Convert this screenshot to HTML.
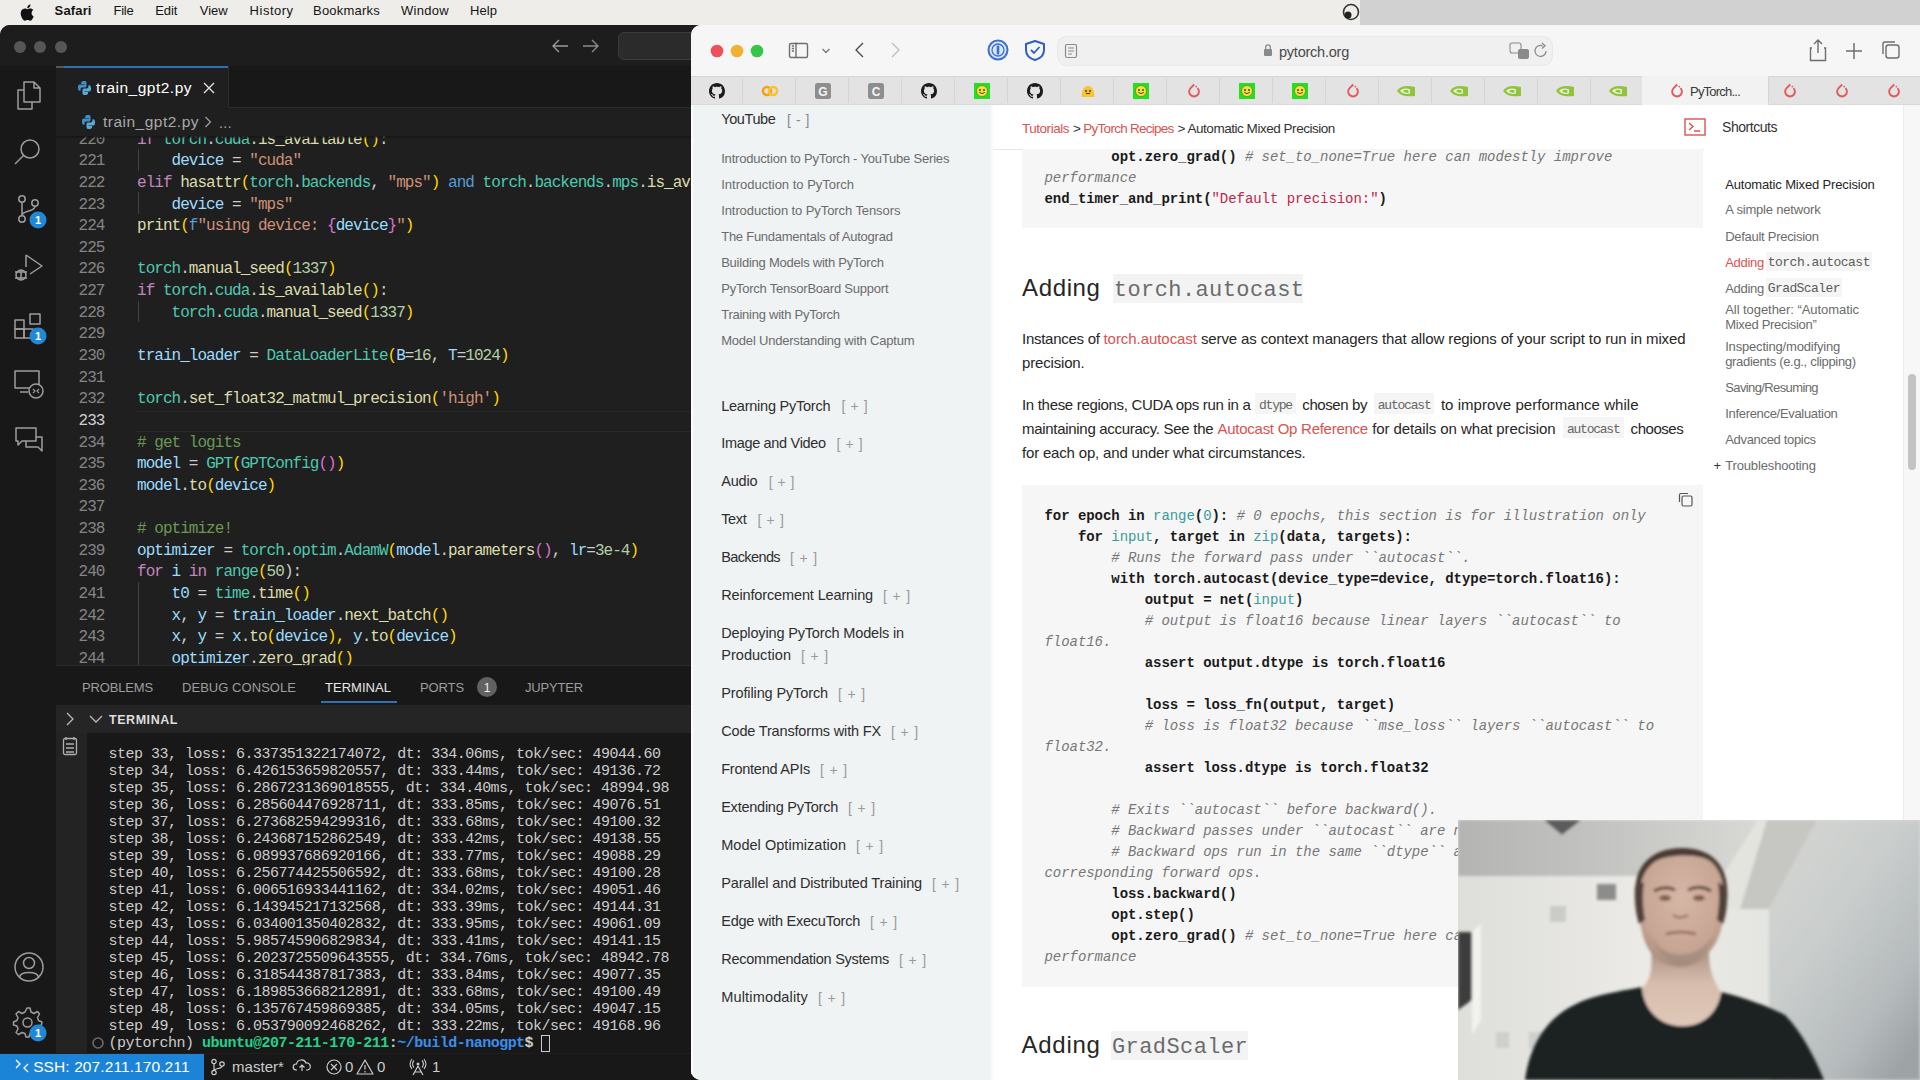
<!DOCTYPE html>
<html><head><meta charset="utf-8">
<style>
*{margin:0;padding:0;box-sizing:border-box}
html,body{width:1920px;height:1080px;overflow:hidden;background:#d0d0d0;font-family:"Liberation Sans",sans-serif}
.t{position:absolute;white-space:pre}
.r{position:absolute}
.m{position:absolute;white-space:pre;font-family:"Liberation Mono",monospace}
</style></head><body>

<div class="r" style="left:0px;top:0px;width:1920px;height:25px;background:#eeede9;"></div>
<div class="r" style="left:1360px;top:0px;width:560px;height:25px;background:#d1d1d1;"></div>
<svg class="r" style="left:20px;top:4px;" width="14" height="17" viewBox="0 0 14 17"><path d="M11.6 9.1c0-2 1.6-2.9 1.7-3-0.9-1.4-2.4-1.5-2.9-1.6-1.2-0.1-2.400.7-3 .7s-1.6-.7-2.600-.7C3.400 4.600 2.100 5.400 1.400 6.600c-1.400 2.500-.4 6.100 1 8.100.7 1 1.500 2.100 2.500 2 1-.04 1.400-.6 2.600-.6s1.600.6 2.600.6c1.100 0 1.800-1 2.400-2 .8-1.100 1.100-2.200 1.100-2.300-.03 0-2.100-.8-2.100-3.300zM9.700 3.100c.5-.7.9-1.600.8-2.600-.8 0-1.800.5-2.400 1.200-.5.600-1 1.600-.8 2.500.9.1 1.800-.4 2.400-1.100z" fill="#111"/></svg>
<div class="t" style="left:54.6px;top:3.4px;font-size:13px;line-height:15.6px;color:#151515;font-weight:700;letter-spacing:0.145px;">Safari</div>
<div class="t" style="left:113.5px;top:3.4px;font-size:13px;line-height:15.6px;color:#151515;letter-spacing:-0.237px;">File</div>
<div class="t" style="left:155.3px;top:3.4px;font-size:13px;line-height:15.6px;color:#151515;letter-spacing:-0.100px;">Edit</div>
<div class="t" style="left:199.7px;top:3.4px;font-size:13px;line-height:15.6px;color:#151515;letter-spacing:0.015px;">View</div>
<div class="t" style="left:249.6px;top:3.4px;font-size:13px;line-height:15.6px;color:#151515;letter-spacing:0.508px;">History</div>
<div class="t" style="left:313.0px;top:3.4px;font-size:13px;line-height:15.6px;color:#151515;letter-spacing:0.220px;">Bookmarks</div>
<div class="t" style="left:401.0px;top:3.4px;font-size:13px;line-height:15.6px;color:#151515;letter-spacing:0.294px;">Window</div>
<div class="t" style="left:470.0px;top:3.4px;font-size:13px;line-height:15.6px;color:#151515;letter-spacing:0.066px;">Help</div>
<svg class="r" style="left:1340px;top:2px;" width="22" height="20" viewBox="0 0 22 20"><circle cx="11" cy="10" r="7.5" fill="none" stroke="#333" stroke-width="1.6"/><circle cx="8" cy="13" r="3.5" fill="#222"/></svg>
<div class="r" style="left:0px;top:25px;width:20px;height:20px;background:#eeede9;"></div>
<div class="r" style="left:680px;top:25px;width:30px;height:30px;background:#1d1d1d;"></div>
<div class="r" style="left:680px;top:1050px;width:30px;height:30px;background:#181818;"></div>
<div class="r" style="left:0;top:25px;width:691px;height:1055px;background:#1f1f1f;border-top-left-radius:10px;overflow:hidden">
<div class="r" style="left:0px;top:0px;width:691px;height:41px;background:#1d1d1d;"></div>
<div class="r" style="left:0px;top:41px;width:691px;height:1px;background:#2b2b2b;"></div>
<svg class="r" style="left:13px;top:15px;" width="14" height="14" viewBox="0 0 14 14"><circle cx="7" cy="7" r="6" fill="#565656"/></svg>
<svg class="r" style="left:33px;top:15px;" width="14" height="14" viewBox="0 0 14 14"><circle cx="7" cy="7" r="6" fill="#565656"/></svg>
<svg class="r" style="left:54px;top:15px;" width="14" height="14" viewBox="0 0 14 14"><circle cx="7" cy="7" r="6" fill="#565656"/></svg>
<svg class="r" style="left:551px;top:13px;" width="20" height="16" viewBox="0 0 20 16"><path d="M2 8H17M8 2L2 8L8 14" fill="none" stroke="#9a9a9a" stroke-width="1.4"/></svg>
<svg class="r" style="left:582px;top:13px;" width="20" height="16" viewBox="0 0 20 16"><path d="M1 8H16M10 2L16 8L10 14" fill="none" stroke="#8a8a8a" stroke-width="1.4"/></svg>
<div class="r" style="left:618px;top:7px;width:100px;height:28px;background:#2b2b2b;border:1px solid #3c3c3c;border-radius:6px"></div>
<div class="r" style="left:0px;top:41px;width:691px;height:42px;background:#181818;"></div>
<div class="r" style="left:56px;top:41px;width:172px;height:42px;background:#1f1f1f;"></div>
<div class="r" style="left:56px;top:41px;width:8px;height:2px;background:#555;"></div>
<div class="r" style="left:64px;top:41px;width:164px;height:2px;background:#2f6fb5;"></div>
<div class="r" style="left:228px;top:41px;width:1px;height:42px;background:#2b2b2b;"></div>
<div class="r" style="left:228px;top:82px;width:463px;height:1px;background:#2b2b2b;"></div>
<svg class="r" style="left:77px;top:55px;" width="16" height="16" viewBox="0 0 16 16"><g transform="scale(1)"><path d="M7.5 1C4 1 4.2 2.5 4.2 2.5V4h3.4v.5H2.8S1 4.300 1 7.600s1.600 3.200 1.600 3.200h1V9.200s-.1-1.600 1.600-1.600h2.800s1.500 0 1.500-1.500V2.600S9.700 1 7.500 1z" fill="#3d8fc6"/><path d="M7.700 15c3.500 0 3.300-1.500 3.300-1.500V12H7.600v-.5h4.800S14 11.700 14 8.400s-1.600-3.200-1.600-3.200h-1v1.600s.1 1.600-1.600 1.600H7s-1.500 0-1.500 1.500v2.800S5.300 15 7.700 15z" fill="#5aa9d6"/></g></svg>
<div class="t" style="left:96.0px;top:54.0px;font-size:15.5px;line-height:18.6px;color:#ffffff;letter-spacing:0.492px;">train_gpt2.py</div>
<svg class="r" style="left:203px;top:57px;" width="12" height="12" viewBox="0 0 12 12"><path d="M1 1L11 11M11 1L1 11" stroke="#e0e0e0" stroke-width="1.4"/></svg>
<svg class="r" style="left:81px;top:89px;" width="16" height="16" viewBox="0 0 16 16"><g transform="scale(1)"><path d="M7.5 1C4 1 4.2 2.5 4.2 2.5V4h3.4v.5H2.8S1 4.300 1 7.600s1.600 3.200 1.600 3.200h1V9.200s-.1-1.600 1.600-1.600h2.800s1.500 0 1.500-1.500V2.600S9.700 1 7.500 1z" fill="#3d8fc6"/><path d="M7.700 15c3.500 0 3.300-1.500 3.300-1.500V12H7.600v-.5h4.800S14 11.700 14 8.400s-1.600-3.200-1.600-3.200h-1v1.600s.1 1.600-1.600 1.600H7s-1.500 0-1.500 1.500v2.800S5.300 15 7.700 15z" fill="#5aa9d6"/></g></svg>
<div class="t" style="left:103.0px;top:88.0px;font-size:15.5px;line-height:18.6px;color:#a8a8a8;letter-spacing:0.492px;">train_gpt2.py</div>
<svg class="r" style="left:204px;top:91px;" width="8" height="12" viewBox="0 0 8 12"><path d="M1.5 1L6.5 6L1.5 11" fill="none" stroke="#a0a0a0" stroke-width="1.2"/></svg>
<div class="t" style="left:219.0px;top:90.4px;font-size:14px;line-height:16.8px;color:#a8a8a8;letter-spacing:0.444px;">...</div>
<div class="r" style="left:0px;top:41px;width:56px;height:987px;background:#181818;"></div>
<svg class="r" style="left:14px;top:55px;" width="30" height="32" viewBox="0 0 30 32"><path d="M10 2H20L26 8V22H10Z M20 2V8H26" fill="none" stroke="#9d9d9d" stroke-width="1.5" stroke-linejoin="round"/><path d="M10 10H4V29H18V22" fill="none" stroke="#9d9d9d" stroke-width="1.5" stroke-linejoin="round"/></svg>
<svg class="r" style="left:12px;top:111px;" width="32" height="32" viewBox="0 0 32 32"><circle cx="18" cy="13" r="9" fill="none" stroke="#9d9d9d" stroke-width="1.5" stroke-linejoin="round"/><path d="M11.5 19.5L3 28" fill="none" stroke="#9d9d9d" stroke-width="1.5" stroke-linejoin="round"/></svg>
<svg class="r" style="left:14px;top:169px;" width="30" height="32" viewBox="0 0 30 32"><circle cx="8" cy="5" r="3.2" fill="none" stroke="#9d9d9d" stroke-width="1.5" stroke-linejoin="round"/><circle cx="21" cy="9" r="3.2" fill="none" stroke="#9d9d9d" stroke-width="1.5" stroke-linejoin="round"/><circle cx="8" cy="25" r="3.2" fill="none" stroke="#9d9d9d" stroke-width="1.5" stroke-linejoin="round"/><path d="M8 8.2V21.8M21 12.2C21 18 10 16 8 21" fill="none" stroke="#9d9d9d" stroke-width="1.5" stroke-linejoin="round"/></svg>
<svg class="r" style="left:12px;top:227px;" width="34" height="32" viewBox="0 0 34 32"><path d="M14 3V15M14 3L30 14L18 22" fill="none" stroke="#9d9d9d" stroke-width="1.5" stroke-linejoin="round"/><circle cx="9" cy="23" r="5" fill="none" stroke="#9d9d9d" stroke-width="1.5" stroke-linejoin="round"/><path d="M3 20H15M3 26H15M9 18V28" fill="none" stroke="#9d9d9d" stroke-width="1.5" stroke-linejoin="round"/></svg>
<svg class="r" style="left:12px;top:286px;" width="34" height="34" viewBox="0 0 34 34"><rect x="3" y="9" width="9" height="9" fill="none" stroke="#9d9d9d" stroke-width="1.5" stroke-linejoin="round"/><rect x="3" y="18" width="9" height="9" fill="none" stroke="#9d9d9d" stroke-width="1.5" stroke-linejoin="round"/><rect x="12" y="18" width="9" height="9" fill="none" stroke="#9d9d9d" stroke-width="1.5" stroke-linejoin="round"/><rect x="18" y="3" width="10" height="10" fill="none" stroke="#9d9d9d" stroke-width="1.5" stroke-linejoin="round"/></svg>
<svg class="r" style="left:12px;top:343px;" width="34" height="34" viewBox="0 0 34 34"><path d="M3 3H27V20H3Z M8 24H16" fill="none" stroke="#9d9d9d" stroke-width="1.5" stroke-linejoin="round"/><circle cx="24" cy="23" r="7" fill="#181818" stroke="#9d9d9d" stroke-width="1.5"/><path d="M21 21L23 23L21 25M27 21L25 23L27 25" fill="none" stroke="#9d9d9d" stroke-width="1.2"/></svg>
<svg class="r" style="left:12px;top:400px;" width="34" height="32" viewBox="0 0 34 32"><path d="M4 3H24V16H10L6 20V16H4Z" fill="none" stroke="#9d9d9d" stroke-width="1.5" stroke-linejoin="round"/><path d="M14 16V22H26L30 26V22V12H24" fill="none" stroke="#9d9d9d" stroke-width="1.5" stroke-linejoin="round"/></svg>
<svg class="r" style="left:29px;top:186px;" width="18" height="18" viewBox="0 0 18 18"><circle cx="9" cy="9" r="8.5" fill="#2188d8"/><text x="9" y="13" text-anchor="middle" font-family="Liberation Sans" font-weight="700" font-size="11" fill="#fff">1</text></svg>
<svg class="r" style="left:29px;top:302px;" width="18" height="18" viewBox="0 0 18 18"><circle cx="9" cy="9" r="8.5" fill="#2188d8"/><text x="9" y="13" text-anchor="middle" font-family="Liberation Sans" font-weight="700" font-size="11" fill="#fff">1</text></svg>
<svg class="r" style="left:12px;top:925px;" width="34" height="34" viewBox="0 0 34 34"><circle cx="17" cy="17" r="14" fill="none" stroke="#9d9d9d" stroke-width="1.5" stroke-linejoin="round"/><circle cx="17" cy="13" r="5.5" fill="none" stroke="#9d9d9d" stroke-width="1.5" stroke-linejoin="round"/><path d="M7.5 27C9 21 25 21 26.5 27" fill="none" stroke="#9d9d9d" stroke-width="1.5" stroke-linejoin="round"/></svg>
<svg class="r" style="left:10px;top:979px;" width="36" height="36" viewBox="0 0 36 36"><path d="M17 4L20 4L21 8L24 9.500L27.500 7.500L29.500 10L27.500 13.500L28.500 16.500L32 18L31.500 21L28 22L27 25L29 28.500L26.500 30.500L23 28.500L20 29.500L19 33H16L15 29.500L12 28.500L8.500 30.500L6 28.500L8 25L7 22L3.500 21L3.500 18L7 16.500L8 13.500L6 10L8.500 7.500L12 9.500L15 8Z" fill="none" stroke="#9d9d9d" stroke-width="1.5" stroke-linejoin="round"/><circle cx="17.500" cy="18.500" r="4.500" fill="none" stroke="#9d9d9d" stroke-width="1.5"/></svg>
<svg class="r" style="left:29px;top:999px;" width="18" height="18" viewBox="0 0 18 18"><circle cx="9" cy="9" r="8.5" fill="#2188d8"/><text x="9" y="13" text-anchor="middle" font-family="Liberation Sans" font-weight="700" font-size="11" fill="#fff">1</text></svg>
<div class="r" style="left:56px;top:83px;width:635px;height:557px;overflow:hidden;background:#1f1f1f">
<div class="m" style="left:22.5px;top:21.7px;font-size:16px;letter-spacing:-0.963px;line-height:21.63px;color:#858585">220</div>
<div class="m" style="left:81px;top:21.7px;font-size:16px;letter-spacing:-0.963px;line-height:21.63px"><span style="color:#c586c0">if </span><span style="color:#4ec9b0">torch</span><span style="color:#cccccc">.</span><span style="color:#4ec9b0">cuda</span><span style="color:#cccccc">.</span><span style="color:#dcdcaa">is_available</span><span style="color:#ffd700">()</span><span style="color:#cccccc">:</span></div>
<div class="m" style="left:22.5px;top:43.3px;font-size:16px;letter-spacing:-0.963px;line-height:21.63px;color:#858585">221</div>
<div class="m" style="left:81px;top:43.3px;font-size:16px;letter-spacing:-0.963px;line-height:21.63px"><span style="color:#9cdcfe">    device</span><span style="color:#cccccc"> = </span><span style="color:#ce9178">&quot;cuda&quot;</span></div>
<div class="m" style="left:22.5px;top:64.9px;font-size:16px;letter-spacing:-0.963px;line-height:21.63px;color:#858585">222</div>
<div class="m" style="left:81px;top:64.9px;font-size:16px;letter-spacing:-0.963px;line-height:21.63px"><span style="color:#c586c0">elif </span><span style="color:#dcdcaa">hasattr</span><span style="color:#ffd700">(</span><span style="color:#4ec9b0">torch</span><span style="color:#cccccc">.</span><span style="color:#4ec9b0">backends</span><span style="color:#cccccc">, </span><span style="color:#ce9178">&quot;mps&quot;</span><span style="color:#ffd700">)</span><span style="color:#569cd6"> and </span><span style="color:#4ec9b0">torch</span><span style="color:#cccccc">.</span><span style="color:#4ec9b0">backends</span><span style="color:#cccccc">.</span><span style="color:#4ec9b0">mps</span><span style="color:#cccccc">.</span><span style="color:#dcdcaa">is_available</span><span style="color:#ffd700">()</span><span style="color:#cccccc">:</span></div>
<div class="m" style="left:22.5px;top:86.5px;font-size:16px;letter-spacing:-0.963px;line-height:21.63px;color:#858585">223</div>
<div class="m" style="left:81px;top:86.5px;font-size:16px;letter-spacing:-0.963px;line-height:21.63px"><span style="color:#9cdcfe">    device</span><span style="color:#cccccc"> = </span><span style="color:#ce9178">&quot;mps&quot;</span></div>
<div class="m" style="left:22.5px;top:108.2px;font-size:16px;letter-spacing:-0.963px;line-height:21.63px;color:#858585">224</div>
<div class="m" style="left:81px;top:108.2px;font-size:16px;letter-spacing:-0.963px;line-height:21.63px"><span style="color:#dcdcaa">print</span><span style="color:#ffd700">(</span><span style="color:#569cd6">f</span><span style="color:#ce9178">&quot;using device: </span><span style="color:#da70d6">{</span><span style="color:#9cdcfe">device</span><span style="color:#da70d6">}</span><span style="color:#ce9178">&quot;</span><span style="color:#ffd700">)</span></div>
<div class="m" style="left:22.5px;top:129.8px;font-size:16px;letter-spacing:-0.963px;line-height:21.63px;color:#858585">225</div>
<div class="m" style="left:22.5px;top:151.4px;font-size:16px;letter-spacing:-0.963px;line-height:21.63px;color:#858585">226</div>
<div class="m" style="left:81px;top:151.4px;font-size:16px;letter-spacing:-0.963px;line-height:21.63px"><span style="color:#4ec9b0">torch</span><span style="color:#cccccc">.</span><span style="color:#dcdcaa">manual_seed</span><span style="color:#ffd700">(</span><span style="color:#b5cea8">1337</span><span style="color:#ffd700">)</span></div>
<div class="m" style="left:22.5px;top:173.1px;font-size:16px;letter-spacing:-0.963px;line-height:21.63px;color:#858585">227</div>
<div class="m" style="left:81px;top:173.1px;font-size:16px;letter-spacing:-0.963px;line-height:21.63px"><span style="color:#c586c0">if </span><span style="color:#4ec9b0">torch</span><span style="color:#cccccc">.</span><span style="color:#4ec9b0">cuda</span><span style="color:#cccccc">.</span><span style="color:#dcdcaa">is_available</span><span style="color:#ffd700">()</span><span style="color:#cccccc">:</span></div>
<div class="m" style="left:22.5px;top:194.7px;font-size:16px;letter-spacing:-0.963px;line-height:21.63px;color:#858585">228</div>
<div class="m" style="left:81px;top:194.7px;font-size:16px;letter-spacing:-0.963px;line-height:21.63px"><span style="color:#cccccc">    </span><span style="color:#4ec9b0">torch</span><span style="color:#cccccc">.</span><span style="color:#4ec9b0">cuda</span><span style="color:#cccccc">.</span><span style="color:#dcdcaa">manual_seed</span><span style="color:#ffd700">(</span><span style="color:#b5cea8">1337</span><span style="color:#ffd700">)</span></div>
<div class="m" style="left:22.5px;top:216.3px;font-size:16px;letter-spacing:-0.963px;line-height:21.63px;color:#858585">229</div>
<div class="m" style="left:22.5px;top:238.0px;font-size:16px;letter-spacing:-0.963px;line-height:21.63px;color:#858585">230</div>
<div class="m" style="left:81px;top:238.0px;font-size:16px;letter-spacing:-0.963px;line-height:21.63px"><span style="color:#9cdcfe">train_loader</span><span style="color:#cccccc"> = </span><span style="color:#4ec9b0">DataLoaderLite</span><span style="color:#ffd700">(</span><span style="color:#9cdcfe">B</span><span style="color:#cccccc">=</span><span style="color:#b5cea8">16</span><span style="color:#cccccc">, </span><span style="color:#9cdcfe">T</span><span style="color:#cccccc">=</span><span style="color:#b5cea8">1024</span><span style="color:#ffd700">)</span></div>
<div class="m" style="left:22.5px;top:259.6px;font-size:16px;letter-spacing:-0.963px;line-height:21.63px;color:#858585">231</div>
<div class="m" style="left:22.5px;top:281.2px;font-size:16px;letter-spacing:-0.963px;line-height:21.63px;color:#858585">232</div>
<div class="m" style="left:81px;top:281.2px;font-size:16px;letter-spacing:-0.963px;line-height:21.63px"><span style="color:#4ec9b0">torch</span><span style="color:#cccccc">.</span><span style="color:#dcdcaa">set_float32_matmul_precision</span><span style="color:#ffd700">(</span><span style="color:#ce9178">&#x27;high&#x27;</span><span style="color:#ffd700">)</span></div>
<div class="m" style="left:22.5px;top:302.8px;font-size:16px;letter-spacing:-0.963px;line-height:21.63px;color:#d0d0d0">233</div>
<div class="r" style="left:79px;top:302.7px;width:600px;height:21.6px;border-top:1px solid #282828;border-bottom:1px solid #282828"></div>
<div class="m" style="left:22.5px;top:324.5px;font-size:16px;letter-spacing:-0.963px;line-height:21.63px;color:#858585">234</div>
<div class="m" style="left:81px;top:324.5px;font-size:16px;letter-spacing:-0.963px;line-height:21.63px"><span style="color:#6a9955"># get logits</span></div>
<div class="m" style="left:22.5px;top:346.1px;font-size:16px;letter-spacing:-0.963px;line-height:21.63px;color:#858585">235</div>
<div class="m" style="left:81px;top:346.1px;font-size:16px;letter-spacing:-0.963px;line-height:21.63px"><span style="color:#9cdcfe">model</span><span style="color:#cccccc"> = </span><span style="color:#4ec9b0">GPT</span><span style="color:#ffd700">(</span><span style="color:#4ec9b0">GPTConfig</span><span style="color:#da70d6">()</span><span style="color:#ffd700">)</span></div>
<div class="m" style="left:22.5px;top:367.7px;font-size:16px;letter-spacing:-0.963px;line-height:21.63px;color:#858585">236</div>
<div class="m" style="left:81px;top:367.7px;font-size:16px;letter-spacing:-0.963px;line-height:21.63px"><span style="color:#9cdcfe">model</span><span style="color:#cccccc">.</span><span style="color:#dcdcaa">to</span><span style="color:#ffd700">(</span><span style="color:#9cdcfe">device</span><span style="color:#ffd700">)</span></div>
<div class="m" style="left:22.5px;top:389.4px;font-size:16px;letter-spacing:-0.963px;line-height:21.63px;color:#858585">237</div>
<div class="m" style="left:22.5px;top:411.0px;font-size:16px;letter-spacing:-0.963px;line-height:21.63px;color:#858585">238</div>
<div class="m" style="left:81px;top:411.0px;font-size:16px;letter-spacing:-0.963px;line-height:21.63px"><span style="color:#6a9955"># optimize!</span></div>
<div class="m" style="left:22.5px;top:432.6px;font-size:16px;letter-spacing:-0.963px;line-height:21.63px;color:#858585">239</div>
<div class="m" style="left:81px;top:432.6px;font-size:16px;letter-spacing:-0.963px;line-height:21.63px"><span style="color:#9cdcfe">optimizer</span><span style="color:#cccccc"> = </span><span style="color:#4ec9b0">torch</span><span style="color:#cccccc">.</span><span style="color:#4ec9b0">optim</span><span style="color:#cccccc">.</span><span style="color:#4ec9b0">AdamW</span><span style="color:#ffd700">(</span><span style="color:#9cdcfe">model</span><span style="color:#cccccc">.</span><span style="color:#dcdcaa">parameters</span><span style="color:#da70d6">()</span><span style="color:#cccccc">, </span><span style="color:#9cdcfe">lr</span><span style="color:#cccccc">=</span><span style="color:#b5cea8">3e-4</span><span style="color:#ffd700">)</span></div>
<div class="m" style="left:22.5px;top:454.3px;font-size:16px;letter-spacing:-0.963px;line-height:21.63px;color:#858585">240</div>
<div class="m" style="left:81px;top:454.3px;font-size:16px;letter-spacing:-0.963px;line-height:21.63px"><span style="color:#c586c0">for </span><span style="color:#9cdcfe">i</span><span style="color:#c586c0"> in </span><span style="color:#4ec9b0">range</span><span style="color:#ffd700">(</span><span style="color:#b5cea8">50</span><span style="color:#cccccc">):</span></div>
<div class="m" style="left:22.5px;top:475.9px;font-size:16px;letter-spacing:-0.963px;line-height:21.63px;color:#858585">241</div>
<div class="m" style="left:81px;top:475.9px;font-size:16px;letter-spacing:-0.963px;line-height:21.63px"><span style="color:#9cdcfe">    t0</span><span style="color:#cccccc"> = </span><span style="color:#4ec9b0">time</span><span style="color:#cccccc">.</span><span style="color:#dcdcaa">time</span><span style="color:#ffd700">()</span></div>
<div class="m" style="left:22.5px;top:497.5px;font-size:16px;letter-spacing:-0.963px;line-height:21.63px;color:#858585">242</div>
<div class="m" style="left:81px;top:497.5px;font-size:16px;letter-spacing:-0.963px;line-height:21.63px"><span style="color:#9cdcfe">    x</span><span style="color:#cccccc">, </span><span style="color:#9cdcfe">y</span><span style="color:#cccccc"> = </span><span style="color:#9cdcfe">train_loader</span><span style="color:#cccccc">.</span><span style="color:#dcdcaa">next_batch</span><span style="color:#ffd700">()</span></div>
<div class="m" style="left:22.5px;top:519.1px;font-size:16px;letter-spacing:-0.963px;line-height:21.63px;color:#858585">243</div>
<div class="m" style="left:81px;top:519.1px;font-size:16px;letter-spacing:-0.963px;line-height:21.63px"><span style="color:#9cdcfe">    x</span><span style="color:#cccccc">, </span><span style="color:#9cdcfe">y</span><span style="color:#cccccc"> = </span><span style="color:#9cdcfe">x</span><span style="color:#cccccc">.</span><span style="color:#dcdcaa">to</span><span style="color:#ffd700">(</span><span style="color:#9cdcfe">device</span><span style="color:#ffd700">), </span><span style="color:#9cdcfe">y</span><span style="color:#cccccc">.</span><span style="color:#dcdcaa">to</span><span style="color:#ffd700">(</span><span style="color:#9cdcfe">device</span><span style="color:#ffd700">)</span></div>
<div class="m" style="left:22.5px;top:540.8px;font-size:16px;letter-spacing:-0.963px;line-height:21.63px;color:#858585">244</div>
<div class="m" style="left:81px;top:540.8px;font-size:16px;letter-spacing:-0.963px;line-height:21.63px"><span style="color:#9cdcfe">    optimizer</span><span style="color:#cccccc">.</span><span style="color:#dcdcaa">zero_grad</span><span style="color:#ffd700">()</span></div>
<div class="r" style="left:81.5px;top:41.2px;width:1px;height:21.6px;background:#404040"></div>
<div class="r" style="left:81.5px;top:84.4px;width:1px;height:21.6px;background:#404040"></div>
<div class="r" style="left:81.5px;top:192.6px;width:1px;height:21.6px;background:#404040"></div>
<div class="r" style="left:81.5px;top:473.8px;width:1px;height:86.5px;background:#404040"></div>
</div>
<div class="r" style="left:56px;top:83px;width:635px;height:28px;background:#1f1f1f;"></div>
<div class="r" style="left:56px;top:111px;width:635px;height:3px;background:linear-gradient(#151515,rgba(31,31,31,0));"></div>
<div class="t" style="left:103.0px;top:88.0px;font-size:15.5px;line-height:18.6px;color:#a8a8a8;letter-spacing:0.492px;">train_gpt2.py</div>
<svg class="r" style="left:81px;top:89px;" width="16" height="16" viewBox="0 0 16 16"><g transform="scale(1)"><path d="M7.5 1C4 1 4.2 2.5 4.2 2.5V4h3.4v.5H2.8S1 4.300 1 7.600s1.600 3.200 1.600 3.200h1V9.200s-.1-1.600 1.600-1.600h2.800s1.500 0 1.500-1.500V2.600S9.700 1 7.500 1z" fill="#3d8fc6"/><path d="M7.700 15c3.500 0 3.300-1.500 3.300-1.500V12H7.600v-.5h4.800S14 11.700 14 8.400s-1.600-3.200-1.600-3.200h-1v1.600s.1 1.600-1.600 1.600H7s-1.500 0-1.500 1.500v2.800S5.300 15 7.700 15z" fill="#5aa9d6"/></g></svg>
<svg class="r" style="left:204px;top:91px;" width="8" height="12" viewBox="0 0 8 12"><path d="M1.5 1L6.5 6L1.5 11" fill="none" stroke="#a0a0a0" stroke-width="1.2"/></svg>
<div class="t" style="left:219.0px;top:90.4px;font-size:14px;line-height:16.8px;color:#a8a8a8;letter-spacing:0.444px;">...</div>
<div class="r" style="left:56px;top:640px;width:635px;height:388px;background:#181818;"></div>
<div class="r" style="left:56px;top:640px;width:635px;height:1px;background:#2b2b2b;"></div>
<div class="t" style="left:82.0px;top:654.5px;font-size:13px;line-height:15.6px;color:#9d9d9d;letter-spacing:-0.155px;">PROBLEMS</div>
<div class="t" style="left:182.0px;top:654.5px;font-size:13px;line-height:15.6px;color:#9d9d9d;letter-spacing:0.045px;">DEBUG CONSOLE</div>
<div class="t" style="left:325.0px;top:654.5px;font-size:13px;line-height:15.6px;color:#e7e7e7;letter-spacing:0.034px;">TERMINAL</div>
<div class="t" style="left:420.0px;top:654.5px;font-size:13px;line-height:15.6px;color:#9d9d9d;letter-spacing:-0.109px;">PORTS</div>
<div class="t" style="left:525.0px;top:654.5px;font-size:13px;line-height:15.6px;color:#9d9d9d;letter-spacing:-0.176px;">JUPYTER</div>
<div class="r" style="left:321px;top:676px;width:76px;height:2px;background:#3071b8;"></div>
<svg class="r" style="left:477px;top:652px;" width="20" height="20" viewBox="0 0 20 20"><circle cx="10" cy="10" r="10" fill="#616161"/><text x="10" y="14.5" text-anchor="middle" font-family="Liberation Sans" font-size="12" fill="#f0f0f0">1</text></svg>
<div class="r" style="left:56px;top:680px;width:635px;height:28px;background:#252526;"></div>
<svg class="r" style="left:64px;top:686px;" width="12" height="16" viewBox="0 0 12 16"><path d="M3 2L9 8L3 14" fill="none" stroke="#bbbbbb" stroke-width="1.3"/></svg>
<svg class="r" style="left:88px;top:688px;" width="16" height="12" viewBox="0 0 16 12"><path d="M2 3L8 9L14 3" fill="none" stroke="#bbbbbb" stroke-width="1.3"/></svg>
<div class="t" style="left:109.0px;top:687.8px;font-size:12.5px;line-height:15.0px;color:#dedede;font-weight:700;letter-spacing:0.553px;">TERMINAL</div>
<div class="r" style="left:56px;top:708px;width:31px;height:320px;background:#232323;"></div>
<div class="r" style="left:87px;top:708px;width:604px;height:320px;background:#181818;"></div>
<svg class="r" style="left:61px;top:710px;" width="18" height="22" viewBox="0 0 18 22"><rect x="2.5" y="3.5" width="13" height="16" rx="1.5" fill="none" stroke="#b0b0b0" stroke-width="1.3"/><path d="M5 9H13M5 13H13M5 17H13M5 2V5M13 2V5" stroke="#b0b0b0" stroke-width="1.3"/></svg>
<div class="m" style="left:108.6px;top:721.2px;font-size:15px;letter-spacing:-0.512px;line-height:17.0px;color:#cccccc">step 33, loss: 6.337351322174072, dt: 334.06ms, tok/sec: 49044.60</div>
<div class="m" style="left:108.6px;top:738.2px;font-size:15px;letter-spacing:-0.512px;line-height:17.0px;color:#cccccc">step 34, loss: 6.426153659820557, dt: 333.44ms, tok/sec: 49136.72</div>
<div class="m" style="left:108.6px;top:755.2px;font-size:15px;letter-spacing:-0.512px;line-height:17.0px;color:#cccccc">step 35, loss: 6.2867231369018555, dt: 334.40ms, tok/sec: 48994.98</div>
<div class="m" style="left:108.6px;top:772.2px;font-size:15px;letter-spacing:-0.512px;line-height:17.0px;color:#cccccc">step 36, loss: 6.285604476928711, dt: 333.85ms, tok/sec: 49076.51</div>
<div class="m" style="left:108.6px;top:789.2px;font-size:15px;letter-spacing:-0.512px;line-height:17.0px;color:#cccccc">step 37, loss: 6.273682594299316, dt: 333.68ms, tok/sec: 49100.32</div>
<div class="m" style="left:108.6px;top:806.2px;font-size:15px;letter-spacing:-0.512px;line-height:17.0px;color:#cccccc">step 38, loss: 6.243687152862549, dt: 333.42ms, tok/sec: 49138.55</div>
<div class="m" style="left:108.6px;top:823.2px;font-size:15px;letter-spacing:-0.512px;line-height:17.0px;color:#cccccc">step 39, loss: 6.089937686920166, dt: 333.77ms, tok/sec: 49088.29</div>
<div class="m" style="left:108.6px;top:840.2px;font-size:15px;letter-spacing:-0.512px;line-height:17.0px;color:#cccccc">step 40, loss: 6.256774425506592, dt: 333.68ms, tok/sec: 49100.28</div>
<div class="m" style="left:108.6px;top:857.2px;font-size:15px;letter-spacing:-0.512px;line-height:17.0px;color:#cccccc">step 41, loss: 6.006516933441162, dt: 334.02ms, tok/sec: 49051.46</div>
<div class="m" style="left:108.6px;top:874.2px;font-size:15px;letter-spacing:-0.512px;line-height:17.0px;color:#cccccc">step 42, loss: 6.143945217132568, dt: 333.39ms, tok/sec: 49144.31</div>
<div class="m" style="left:108.6px;top:891.2px;font-size:15px;letter-spacing:-0.512px;line-height:17.0px;color:#cccccc">step 43, loss: 6.034001350402832, dt: 333.95ms, tok/sec: 49061.09</div>
<div class="m" style="left:108.6px;top:908.2px;font-size:15px;letter-spacing:-0.512px;line-height:17.0px;color:#cccccc">step 44, loss: 5.985745906829834, dt: 333.41ms, tok/sec: 49141.15</div>
<div class="m" style="left:108.6px;top:925.2px;font-size:15px;letter-spacing:-0.512px;line-height:17.0px;color:#cccccc">step 45, loss: 6.2023725509643555, dt: 334.76ms, tok/sec: 48942.78</div>
<div class="m" style="left:108.6px;top:942.2px;font-size:15px;letter-spacing:-0.512px;line-height:17.0px;color:#cccccc">step 46, loss: 6.318544387817383, dt: 333.84ms, tok/sec: 49077.35</div>
<div class="m" style="left:108.6px;top:959.2px;font-size:15px;letter-spacing:-0.512px;line-height:17.0px;color:#cccccc">step 47, loss: 6.189853668212891, dt: 333.68ms, tok/sec: 49100.49</div>
<div class="m" style="left:108.6px;top:976.2px;font-size:15px;letter-spacing:-0.512px;line-height:17.0px;color:#cccccc">step 48, loss: 6.135767459869385, dt: 334.05ms, tok/sec: 49047.15</div>
<div class="m" style="left:108.6px;top:993.2px;font-size:15px;letter-spacing:-0.512px;line-height:17.0px;color:#cccccc">step 49, loss: 6.053790092468262, dt: 333.22ms, tok/sec: 49168.96</div>
<svg class="r" style="left:91px;top:1011.2px;" width="14" height="14" viewBox="0 0 14 14"><circle cx="7" cy="7" r="5" fill="none" stroke="#6b6b6b" stroke-width="1.6"/></svg>
<div class="m" style="left:108.6px;top:1010.2px;font-size:15px;letter-spacing:-0.512px;line-height:17.0px;color:#cccccc">(pytorchn) <b style="color:#23d18b">ubuntu@207-211-170-211</b><b style="color:#cccccc">:</b><b style="color:#3b8eea">~/build-nanogpt</b><b style="color:#cccccc">$</b> </div>
<div class="r" style="left:541px;top:1010.2px;width:9px;height:17px;background:transparent;border:1px solid #cccccc"></div>
<div class="r" style="left:0px;top:1029px;width:691px;height:26px;background:#181818;"></div>
<div class="r" style="left:0px;top:1029px;width:204px;height:26px;background:#1c84d7;"></div>
<svg class="r" style="left:14px;top:1033px;" width="16" height="16" viewBox="0 0 16 16"><path d="M2 2L6 6L2 10M14 6L10 10L14 14" fill="none" stroke="#ffffff" stroke-width="1.3"/></svg>
<div class="t" style="left:33.2px;top:1033.0px;font-size:15.5px;line-height:18.6px;color:#ffffff;letter-spacing:0.093px;">SSH: 207.211.170.211</div>
<svg class="r" style="left:209px;top:1033px;" width="18" height="18" viewBox="0 0 18 18"><circle cx="5" cy="3.5" r="2.2" fill="none" stroke="#ccc" stroke-width="1.2"/><circle cx="5" cy="14.5" r="2.2" fill="none" stroke="#ccc" stroke-width="1.2"/><circle cx="13" cy="6" r="2.2" fill="none" stroke="#ccc" stroke-width="1.2"/><path d="M5 5.7V12.3M13 8.2C13 11 6 10 5 12.3" fill="none" stroke="#ccc" stroke-width="1.2"/></svg>
<div class="t" style="left:232.0px;top:1033.3px;font-size:15px;line-height:18.0px;color:#cccccc;letter-spacing:0.046px;">master*</div>
<svg class="r" style="left:292px;top:1033px;" width="20" height="16" viewBox="0 0 20 16"><path d="M5 12H4A3 3 0 0 1 4.5 6A5 5 0 0 1 14 5A3.500 3.500 0 0 1 15.500 12H14M10 13V7M7.500 9.500L10 7L12.500 9.500" fill="none" stroke="#ccc" stroke-width="1.2"/></svg>
<svg class="r" style="left:325px;top:1033px;" width="18" height="18" viewBox="0 0 18 18"><circle cx="9" cy="9" r="7" fill="none" stroke="#ccc" stroke-width="1.2"/><path d="M6 6L12 12M12 6L6 12" stroke="#ccc" stroke-width="1.2"/></svg>
<div class="t" style="left:345.0px;top:1033.3px;font-size:15px;line-height:18.0px;color:#cccccc;">0</div>
<svg class="r" style="left:356px;top:1033px;" width="18" height="18" viewBox="0 0 18 18"><path d="M9 2L17 16H1Z" fill="none" stroke="#ccc" stroke-width="1.2" stroke-linejoin="round"/><path d="M9 7V11.500M9 13V14.500" stroke="#ccc" stroke-width="1.2"/></svg>
<div class="t" style="left:377.0px;top:1033.3px;font-size:15px;line-height:18.0px;color:#cccccc;">0</div>
<svg class="r" style="left:409px;top:1033px;" width="18" height="18" viewBox="0 0 18 18"><path d="M9 8L4 17M9 8L14 17M6 14H12" fill="none" stroke="#ccc" stroke-width="1.2"/><circle cx="9" cy="6" r="1.500" fill="#ccc"/><path d="M5 2.500A5 5 0 0 0 5 9.500M13 2.500A5 5 0 0 1 13 9.500M3 1A7.500 7.500 0 0 0 3 11M15 1A7.500 7.500 0 0 1 15 11" fill="none" stroke="#ccc" stroke-width="1.1"/></svg>
<div class="t" style="left:432.0px;top:1033.3px;font-size:15px;line-height:18.0px;color:#cccccc;">1</div>
</div>
<div class="r" style="left:691px;top:25px;width:1229px;height:1055px;background:#f6f6f6;border-top-left-radius:10px;border-bottom-left-radius:10px;overflow:hidden">
<div class="r" style="left:0px;top:0px;width:1229px;height:51px;background:#f6f6f6;"></div>
<svg class="r" style="left:19px;top:19px;" width="14" height="14" viewBox="0 0 14 14"><circle cx="7" cy="7" r="6.3" fill="#ed4f5b"/></svg>
<svg class="r" style="left:39px;top:19px;" width="14" height="14" viewBox="0 0 14 14"><circle cx="7" cy="7" r="6.3" fill="#f2b231"/></svg>
<svg class="r" style="left:59px;top:19px;" width="14" height="14" viewBox="0 0 14 14"><circle cx="7" cy="7" r="6.3" fill="#35c649"/></svg>
<svg class="r" style="left:97px;top:16px;" width="22" height="18" viewBox="0 0 22 18"><rect x="1.5" y="2.5" width="18" height="14" rx="1.5" fill="none" stroke="#6e6e6e" stroke-width="1.4" stroke-linejoin="round"/><path d="M8 1.500V16.500M3.800 5H6M3.800 7.500H6M3.800 10H6" fill="none" stroke="#6e6e6e" stroke-width="1.4" stroke-linejoin="round"/></svg>
<svg class="r" style="left:130px;top:22px;" width="10" height="8" viewBox="0 0 10 8"><path d="M1.500 2L5 5.500L8.500 2" fill="none" stroke="#777" stroke-width="1.3"/></svg>
<svg class="r" style="left:162px;top:16px;" width="14" height="18" viewBox="0 0 14 18"><path d="M10 2L3 9L10 16" fill="none" stroke="#4a4a4a" stroke-width="1.4" stroke-linejoin="round"/></svg>
<svg class="r" style="left:197px;top:16px;" width="14" height="18" viewBox="0 0 14 18"><path d="M4 2L11 9L4 16" fill="none" stroke="#bdbdbd" stroke-width="1.4" stroke-linejoin="round"/></svg>
<svg class="r" style="left:296px;top:14px;" width="22" height="22" viewBox="0 0 22 22"><circle cx="11" cy="11" r="9.500" fill="#dbe6fb" stroke="#3a6fd8" stroke-width="2"/><circle cx="11" cy="11" r="6" fill="none" stroke="#3a6fd8" stroke-width="1.3"/><rect x="9.700" y="6.500" width="2.600" height="9" rx="1" fill="#3a6fd8"/></svg>
<svg class="r" style="left:333px;top:14px;" width="22" height="22" viewBox="0 0 22 22"><path d="M11 2L20 5V11C20 16 16 19.500 11 21C6 19.500 2 16 2 11V5Z" fill="none" stroke="#2d5fc4" stroke-width="2" stroke-linejoin="round"/><path d="M7 11L10 14L15.500 8" fill="none" stroke="#2d5fc4" stroke-width="1.8"/></svg>
<div class="r" style="left:367px;top:12px;width:494px;height:28px;background:#f0f0f0;border-radius:8px;box-shadow:0 0 0 0.5px #dcdcdc"></div>
<svg class="r" style="left:373px;top:18px;" width="14" height="16" viewBox="0 0 14 16"><rect x="1.500" y="1.500" width="11" height="13" rx="1.500" fill="none" stroke="#8a8a8a" stroke-width="1.2"/><path d="M4 5H10M4 8H10M4 11H8" stroke="#8a8a8a" stroke-width="1"/></svg>
<svg class="r" style="left:572px;top:18px;" width="10" height="14" viewBox="0 0 10 14"><rect x="1" y="6" width="8" height="7" rx="1" fill="#8a8a8a"/><path d="M2.700 6V4.200A2.300 2.300 0 0 1 7.300 4.200V6" fill="none" stroke="#8a8a8a" stroke-width="1.300"/></svg>
<div class="t" style="left:588.0px;top:18.6px;font-size:14.5px;line-height:17.4px;color:#4a4a4a;letter-spacing:-0.230px;">pytorch.org</div>
<svg class="r" style="left:818px;top:16px;" width="22" height="20" viewBox="0 0 22 20"><rect x="1" y="2" width="11" height="10" rx="2" fill="none" stroke="#8a8a8a" stroke-width="1.1"/><rect x="9" y="8" width="11" height="10" rx="2" fill="#8a8a8a"/></svg>
<svg class="r" style="left:842px;top:17px;" width="16" height="17" viewBox="0 0 16 17"><path d="M13 9A5.500 5.500 0 1 1 9.500 3.800M9 1L12 3.800L9 6.500" fill="none" stroke="#8a8a8a" stroke-width="1.3"/></svg>
<svg class="r" style="left:1117px;top:13px;" width="20" height="24" viewBox="0 0 20 24"><path d="M4 10H2.500V22.500H17.500V10H16" fill="none" stroke="#6e6e6e" stroke-width="1.4"/><path d="M10 15V2M6 6L10 2L14 6" fill="none" stroke="#6e6e6e" stroke-width="1.4"/></svg>
<svg class="r" style="left:1154px;top:17px;" width="18" height="18" viewBox="0 0 18 18"><path d="M9 1V17M1 9H17" stroke="#6e6e6e" stroke-width="1.5"/></svg>
<svg class="r" style="left:1190px;top:15px;" width="20" height="20" viewBox="0 0 20 20"><rect x="5" y="5" width="13" height="13" rx="2.500" fill="none" stroke="#6e6e6e" stroke-width="1.4"/><path d="M2 14V4A2 2 0 0 1 4 2H14" fill="none" stroke="#6e6e6e" stroke-width="1.4"/></svg>
<div class="r" style="left:0px;top:51px;width:1229px;height:29px;background:#e3e3e3;"></div>
<div class="r" style="left:0px;top:51px;width:1229px;height:1px;background:#d6d6d6;"></div>
<div class="r" style="left:0px;top:79px;width:1229px;height:1px;background:#d9d9d9;"></div>
<div class="r" style="left:51px;top:53px;width:1px;height:25px;background:#d5d5d5;"></div>
<div class="r" style="left:104px;top:53px;width:1px;height:25px;background:#d5d5d5;"></div>
<div class="r" style="left:157px;top:53px;width:1px;height:25px;background:#d5d5d5;"></div>
<div class="r" style="left:210px;top:53px;width:1px;height:25px;background:#d5d5d5;"></div>
<div class="r" style="left:263px;top:53px;width:1px;height:25px;background:#d5d5d5;"></div>
<div class="r" style="left:316px;top:53px;width:1px;height:25px;background:#d5d5d5;"></div>
<div class="r" style="left:369px;top:53px;width:1px;height:25px;background:#d5d5d5;"></div>
<div class="r" style="left:422px;top:53px;width:1px;height:25px;background:#d5d5d5;"></div>
<div class="r" style="left:475px;top:53px;width:1px;height:25px;background:#d5d5d5;"></div>
<div class="r" style="left:528px;top:53px;width:1px;height:25px;background:#d5d5d5;"></div>
<div class="r" style="left:581px;top:53px;width:1px;height:25px;background:#d5d5d5;"></div>
<div class="r" style="left:634px;top:53px;width:1px;height:25px;background:#d5d5d5;"></div>
<div class="r" style="left:687px;top:53px;width:1px;height:25px;background:#d5d5d5;"></div>
<div class="r" style="left:740px;top:53px;width:1px;height:25px;background:#d5d5d5;"></div>
<div class="r" style="left:793px;top:53px;width:1px;height:25px;background:#d5d5d5;"></div>
<div class="r" style="left:846px;top:53px;width:1px;height:25px;background:#d5d5d5;"></div>
<div class="r" style="left:899px;top:53px;width:1px;height:25px;background:#d5d5d5;"></div>
<div class="r" style="left:951px;top:51px;width:126px;height:29px;background:#f2f2f2;"></div>
<div class="r" style="left:1077px;top:53px;width:1px;height:25px;background:#d5d5d5;"></div>
<svg class="r" style="left:18px;top:58px;" width="16" height="16" viewBox="0 0 16 16"><path d="M8 0C3.580 0 0 3.580 0 8c0 3.540 2.290 6.530 5.470 7.590.4.070.55-.17.55-.38 0-.19-.01-.82-.01-1.490-2.010.37-2.530-.49-2.690-.94-.09-.23-.48-.94-.82-1.130-.28-.15-.68-.52-.01-.53.63-.01 1.080.58 1.230.82.72 1.210 1.870.87 2.330.66.07-.52.28-.87.51-1.070-1.780-.2-3.640-.89-3.640-3.950 0-.87.31-1.590.82-2.150-.08-.2-.36-1.020.08-2.120 0 0 .67-.21 2.200.82.64-.18 1.320-.27 2-.27.68 0 1.360.09 2 .27 1.530-1.040 2.200-.82 2.200-.82.44 1.100.16 1.920.08 2.120.51.56.82 1.270.82 2.150 0 3.070-1.870 3.750-3.650 3.950.29.25.54.73.54 1.480 0 1.070-.01 1.930-.01 2.200 0 .21.15.46.55.38A8.013 8.013 0 0016 8c0-4.420-3.580-8-8-8z" fill="#1b1b1b"/></svg>
<svg class="r" style="left:70px;top:58px;" width="18" height="16" viewBox="0 0 18 16"><circle cx="6" cy="8" r="4" fill="none" stroke="#f3a216" stroke-width="2.600"/><circle cx="12" cy="8" r="4" fill="none" stroke="#f7c12f" stroke-width="2.600"/></svg>
<svg class="r" style="left:124px;top:58px;" width="16" height="16" viewBox="0 0 16 16"><rect x="0" y="0" width="16" height="16" rx="2.500" fill="#8e8e8e"/><text x="8" y="12.500" text-anchor="middle" font-family="Liberation Sans" font-weight="700" font-size="12" fill="#f4f4f4">G</text></svg>
<svg class="r" style="left:177px;top:58px;" width="16" height="16" viewBox="0 0 16 16"><rect x="0" y="0" width="16" height="16" rx="2.500" fill="#8e8e8e"/><text x="8" y="12.500" text-anchor="middle" font-family="Liberation Sans" font-weight="700" font-size="12" fill="#f4f4f4">C</text></svg>
<svg class="r" style="left:230px;top:58px;" width="16" height="16" viewBox="0 0 16 16"><path d="M8 0C3.580 0 0 3.580 0 8c0 3.540 2.290 6.530 5.470 7.590.4.070.55-.17.55-.38 0-.19-.01-.82-.01-1.490-2.010.37-2.530-.49-2.690-.94-.09-.23-.48-.94-.82-1.130-.28-.15-.68-.52-.01-.53.63-.01 1.080.58 1.230.82.72 1.210 1.870.87 2.330.66.07-.52.28-.87.51-1.070-1.780-.2-3.640-.89-3.640-3.950 0-.87.31-1.590.82-2.150-.08-.2-.36-1.020.08-2.120 0 0 .67-.21 2.200.82.64-.18 1.320-.27 2-.27.68 0 1.360.09 2 .27 1.530-1.040 2.200-.82 2.200-.82.44 1.100.16 1.920.08 2.120.51.56.82 1.270.82 2.150 0 3.070-1.870 3.750-3.650 3.950.29.25.54.73.54 1.480 0 1.070-.01 1.930-.01 2.200 0 .21.15.46.55.38A8.013 8.013 0 0016 8c0-4.420-3.580-8-8-8z" fill="#1b1b1b"/></svg>
<svg class="r" style="left:283px;top:58px;" width="16" height="16" viewBox="0 0 16 16"><rect x="0" y="0" width="16" height="16" fill="#22e022"/><circle cx="8" cy="8" r="5.500" fill="#f4e23c" stroke="#6a6a10" stroke-width=".6"/><circle cx="6" cy="7" r=".9" fill="#333"/><circle cx="10" cy="7" r=".9" fill="#333"/><path d="M5.200 9.300Q8 12 10.800 9.300" fill="none" stroke="#333" stroke-width=".9"/></svg>
<svg class="r" style="left:336px;top:58px;" width="16" height="16" viewBox="0 0 16 16"><path d="M8 0C3.580 0 0 3.580 0 8c0 3.540 2.290 6.530 5.470 7.590.4.070.55-.17.55-.38 0-.19-.01-.82-.01-1.490-2.010.37-2.530-.49-2.690-.94-.09-.23-.48-.94-.82-1.130-.28-.15-.68-.52-.01-.53.63-.01 1.080.58 1.230.82.72 1.210 1.870.87 2.330.66.07-.52.28-.87.51-1.070-1.780-.2-3.640-.89-3.640-3.950 0-.87.31-1.590.82-2.150-.08-.2-.36-1.020.08-2.120 0 0 .67-.21 2.200.82.64-.18 1.320-.27 2-.27.68 0 1.360.09 2 .27 1.530-1.040 2.200-.82 2.200-.82.44 1.100.16 1.920.08 2.120.51.56.82 1.270.82 2.150 0 3.070-1.870 3.750-3.650 3.950.29.25.54.73.54 1.480 0 1.070-.01 1.930-.01 2.200 0 .21.15.46.55.38A8.013 8.013 0 0016 8c0-4.420-3.580-8-8-8z" fill="#1b1b1b"/></svg>
<svg class="r" style="left:389px;top:58px;" width="16" height="16" viewBox="0 0 16 16"><path d="M2 14C1 9 3 3 8 3S15 9 14 14Z" fill="#f6c534"/><circle cx="6" cy="8" r="1" fill="#5a3b10"/><circle cx="10" cy="8" r="1" fill="#5a3b10"/><path d="M6 10.500H10" stroke="#5a3b10" stroke-width="1"/></svg>
<svg class="r" style="left:442px;top:58px;" width="16" height="16" viewBox="0 0 16 16"><rect x="0" y="0" width="16" height="16" fill="#22e022"/><circle cx="8" cy="8" r="5.500" fill="#f4e23c" stroke="#6a6a10" stroke-width=".6"/><circle cx="6" cy="7" r=".9" fill="#333"/><circle cx="10" cy="7" r=".9" fill="#333"/><path d="M5.200 9.300Q8 12 10.800 9.300" fill="none" stroke="#333" stroke-width=".9"/></svg>
<svg class="r" style="left:495px;top:58px;" width="16" height="16" viewBox="0 0 16 16"><path d="M8.200 1.500L4.600 5.100A4.900 4.900 0 1 0 11.500 5.100" fill="none" stroke="#e05a5e" stroke-width="1.900"/><circle cx="10.300" cy="3.600" r="0.9" fill="#e05a5e"/></svg>
<svg class="r" style="left:548px;top:58px;" width="16" height="16" viewBox="0 0 16 16"><rect x="0" y="0" width="16" height="16" fill="#22e022"/><circle cx="8" cy="8" r="5.500" fill="#f4e23c" stroke="#6a6a10" stroke-width=".6"/><circle cx="6" cy="7" r=".9" fill="#333"/><circle cx="10" cy="7" r=".9" fill="#333"/><path d="M5.200 9.300Q8 12 10.800 9.300" fill="none" stroke="#333" stroke-width=".9"/></svg>
<svg class="r" style="left:601px;top:58px;" width="16" height="16" viewBox="0 0 16 16"><rect x="0" y="0" width="16" height="16" fill="#22e022"/><circle cx="8" cy="8" r="5.500" fill="#f4e23c" stroke="#6a6a10" stroke-width=".6"/><circle cx="6" cy="7" r=".9" fill="#333"/><circle cx="10" cy="7" r=".9" fill="#333"/><path d="M5.200 9.300Q8 12 10.800 9.300" fill="none" stroke="#333" stroke-width=".9"/></svg>
<svg class="r" style="left:654px;top:58px;" width="16" height="16" viewBox="0 0 16 16"><path d="M8.200 1.500L4.600 5.100A4.900 4.900 0 1 0 11.500 5.100" fill="none" stroke="#e05a5e" stroke-width="1.900"/><circle cx="10.300" cy="3.600" r="0.9" fill="#e05a5e"/></svg>
<svg class="r" style="left:705px;top:59px;" width="20" height="14" viewBox="0 0 20 14"><path d="M1 7C4 2 10 1 19 3V12C11 13 5 12 1 7Z" fill="#8fc43c"/><path d="M4 7C7 4 11 4 14 5.500V9.500C11 10.500 7 10 4 7Z" fill="#e8f2d8"/><path d="M7 7C9 5.500 11 5.500 12.500 6.500V8.500C10.500 9 8.500 8.600 7 7Z" fill="#8fc43c"/></svg>
<svg class="r" style="left:758px;top:59px;" width="20" height="14" viewBox="0 0 20 14"><path d="M1 7C4 2 10 1 19 3V12C11 13 5 12 1 7Z" fill="#8fc43c"/><path d="M4 7C7 4 11 4 14 5.500V9.500C11 10.500 7 10 4 7Z" fill="#e8f2d8"/><path d="M7 7C9 5.500 11 5.500 12.500 6.500V8.500C10.500 9 8.500 8.600 7 7Z" fill="#8fc43c"/></svg>
<svg class="r" style="left:811px;top:59px;" width="20" height="14" viewBox="0 0 20 14"><path d="M1 7C4 2 10 1 19 3V12C11 13 5 12 1 7Z" fill="#8fc43c"/><path d="M4 7C7 4 11 4 14 5.500V9.500C11 10.500 7 10 4 7Z" fill="#e8f2d8"/><path d="M7 7C9 5.500 11 5.500 12.500 6.500V8.500C10.500 9 8.500 8.600 7 7Z" fill="#8fc43c"/></svg>
<svg class="r" style="left:864px;top:59px;" width="20" height="14" viewBox="0 0 20 14"><path d="M1 7C4 2 10 1 19 3V12C11 13 5 12 1 7Z" fill="#8fc43c"/><path d="M4 7C7 4 11 4 14 5.500V9.500C11 10.500 7 10 4 7Z" fill="#e8f2d8"/><path d="M7 7C9 5.500 11 5.500 12.500 6.500V8.500C10.500 9 8.500 8.600 7 7Z" fill="#8fc43c"/></svg>
<svg class="r" style="left:917px;top:59px;" width="20" height="14" viewBox="0 0 20 14"><path d="M1 7C4 2 10 1 19 3V12C11 13 5 12 1 7Z" fill="#8fc43c"/><path d="M4 7C7 4 11 4 14 5.500V9.500C11 10.500 7 10 4 7Z" fill="#e8f2d8"/><path d="M7 7C9 5.500 11 5.500 12.500 6.500V8.500C10.500 9 8.500 8.600 7 7Z" fill="#8fc43c"/></svg>
<svg class="r" style="left:978px;top:58px;" width="16" height="16" viewBox="0 0 16 16"><path d="M8.200 1.500L4.600 5.100A4.900 4.900 0 1 0 11.500 5.100" fill="none" stroke="#e05a5e" stroke-width="1.900"/><circle cx="10.300" cy="3.600" r="0.9" fill="#e05a5e"/></svg>
<div class="t" style="left:999.0px;top:59.0px;font-size:13px;line-height:15.6px;color:#3a3a3a;letter-spacing:-0.779px;">PyTorch...</div>
<svg class="r" style="left:1091px;top:58px;" width="16" height="16" viewBox="0 0 16 16"><path d="M8.200 1.500L4.600 5.100A4.900 4.900 0 1 0 11.500 5.100" fill="none" stroke="#e05a5e" stroke-width="1.900"/><circle cx="10.300" cy="3.600" r="0.9" fill="#e05a5e"/></svg>
<svg class="r" style="left:1143px;top:58px;" width="16" height="16" viewBox="0 0 16 16"><path d="M8.200 1.500L4.600 5.100A4.900 4.900 0 1 0 11.500 5.100" fill="none" stroke="#e05a5e" stroke-width="1.900"/><circle cx="10.300" cy="3.600" r="0.9" fill="#e05a5e"/></svg>
<svg class="r" style="left:1195px;top:58px;" width="16" height="16" viewBox="0 0 16 16"><path d="M8.200 1.500L4.600 5.100A4.900 4.900 0 1 0 11.500 5.100" fill="none" stroke="#e05a5e" stroke-width="1.900"/><circle cx="10.300" cy="3.600" r="0.9" fill="#e05a5e"/></svg>
<div class="r" style="left:0px;top:80px;width:1229px;height:975px;background:#ffffff;"></div>
<div class="r" style="left:0px;top:80px;width:302px;height:975px;background:#f0f3f4;"></div>
<div class="r" style="left:0px;top:80px;width:2px;height:975px;background:#fcfcfc;"></div>
<div class="r" style="left:299px;top:80px;width:4px;height:975px;background:linear-gradient(90deg,#f0f3f4,#ffffff);"></div>
<div class="r" style="left:1212px;top:80px;width:17px;height:975px;background:#f7f7f7;border-left:1px solid #ececec"></div>
<div class="r" style="left:1217px;top:349px;width:8px;height:96px;background:#c3c3c3;border-radius:4px"></div>
<div class="t" style="left:30.2px;top:86.4px;font-size:14.5px;line-height:17.4px;color:#2e2e2e;letter-spacing:-0.397px;">YouTube</div>
<div class="t" style="left:96.0px;top:86.7px;font-size:14px;line-height:16.8px;color:#8a8a8a;letter-spacing:0.556px;">[ - ]</div>
<div class="t" style="left:30.2px;top:125.5px;font-size:13px;line-height:15.6px;color:#6b6b6c;letter-spacing:-0.195px;">Introduction to PyTorch - YouTube Series</div>
<div class="t" style="left:30.2px;top:151.5px;font-size:13px;line-height:15.6px;color:#6b6b6c;letter-spacing:-0.002px;">Introduction to PyTorch</div>
<div class="t" style="left:30.2px;top:177.5px;font-size:13px;line-height:15.6px;color:#6b6b6c;letter-spacing:-0.088px;">Introduction to PyTorch Tensors</div>
<div class="t" style="left:30.2px;top:203.5px;font-size:13px;line-height:15.6px;color:#6b6b6c;letter-spacing:-0.253px;">The Fundamentals of Autograd</div>
<div class="t" style="left:30.2px;top:229.5px;font-size:13px;line-height:15.6px;color:#6b6b6c;letter-spacing:-0.235px;">Building Models with PyTorch</div>
<div class="t" style="left:30.2px;top:255.5px;font-size:13px;line-height:15.6px;color:#6b6b6c;letter-spacing:-0.225px;">PyTorch TensorBoard Support</div>
<div class="t" style="left:30.2px;top:281.5px;font-size:13px;line-height:15.6px;color:#6b6b6c;letter-spacing:-0.251px;">Training with PyTorch</div>
<div class="t" style="left:30.2px;top:307.5px;font-size:13px;line-height:15.6px;color:#6b6b6c;letter-spacing:-0.204px;">Model Understanding with Captum</div>
<div class="t" style="left:30.2px;top:372.9px;font-size:14.5px;line-height:17.4px;color:#2e2e2e;letter-spacing:-0.233px;">Learning PyTorch</div>
<div class="t" style="left:150.5px;top:373.2px;font-size:14px;line-height:16.8px;color:#9a9a9a;letter-spacing:0.613px;">[ + ]</div>
<div class="t" style="left:30.2px;top:410.4px;font-size:14.5px;line-height:17.4px;color:#2e2e2e;letter-spacing:-0.318px;">Image and Video</div>
<div class="t" style="left:145.5px;top:410.7px;font-size:14px;line-height:16.8px;color:#9a9a9a;letter-spacing:0.613px;">[ + ]</div>
<div class="t" style="left:30.2px;top:448.4px;font-size:14.5px;line-height:17.4px;color:#2e2e2e;letter-spacing:-0.157px;">Audio</div>
<div class="t" style="left:77.8px;top:448.7px;font-size:14px;line-height:16.8px;color:#9a9a9a;letter-spacing:0.493px;">[ + ]</div>
<div class="t" style="left:30.2px;top:486.4px;font-size:14.5px;line-height:17.4px;color:#2e2e2e;letter-spacing:-0.323px;">Text</div>
<div class="t" style="left:66.5px;top:486.7px;font-size:14px;line-height:16.8px;color:#9a9a9a;letter-spacing:0.653px;">[ + ]</div>
<div class="t" style="left:30.2px;top:524.4px;font-size:14.5px;line-height:17.4px;color:#2e2e2e;letter-spacing:-0.609px;">Backends</div>
<div class="t" style="left:99.0px;top:524.7px;font-size:14px;line-height:16.8px;color:#9a9a9a;letter-spacing:0.853px;">[ + ]</div>
<div class="t" style="left:30.2px;top:562.4px;font-size:14.5px;line-height:17.4px;color:#2e2e2e;letter-spacing:-0.134px;">Reinforcement Learning</div>
<div class="t" style="left:192.0px;top:562.7px;font-size:14px;line-height:16.8px;color:#9a9a9a;letter-spacing:0.853px;">[ + ]</div>
<div class="t" style="left:30.2px;top:600.4px;font-size:14.5px;line-height:17.4px;color:#2e2e2e;letter-spacing:-0.154px;">Deploying PyTorch Models in</div>
<div class="t" style="left:30.2px;top:622.4px;font-size:14.5px;line-height:17.4px;color:#2e2e2e;letter-spacing:0.048px;">Production</div>
<div class="t" style="left:110.0px;top:622.7px;font-size:14px;line-height:16.8px;color:#9a9a9a;letter-spacing:0.853px;">[ + ]</div>
<div class="t" style="left:30.2px;top:660.4px;font-size:14.5px;line-height:17.4px;color:#2e2e2e;letter-spacing:-0.117px;">Profiling PyTorch</div>
<div class="t" style="left:147.0px;top:660.7px;font-size:14px;line-height:16.8px;color:#9a9a9a;letter-spacing:0.853px;">[ + ]</div>
<div class="t" style="left:30.2px;top:698.4px;font-size:14.5px;line-height:17.4px;color:#2e2e2e;letter-spacing:-0.164px;">Code Transforms with FX</div>
<div class="t" style="left:200.0px;top:698.7px;font-size:14px;line-height:16.8px;color:#9a9a9a;letter-spacing:0.853px;">[ + ]</div>
<div class="t" style="left:30.2px;top:736.4px;font-size:14.5px;line-height:17.4px;color:#2e2e2e;letter-spacing:-0.237px;">Frontend APIs</div>
<div class="t" style="left:129.0px;top:736.7px;font-size:14px;line-height:16.8px;color:#9a9a9a;letter-spacing:0.853px;">[ + ]</div>
<div class="t" style="left:30.2px;top:774.4px;font-size:14.5px;line-height:17.4px;color:#2e2e2e;letter-spacing:-0.241px;">Extending PyTorch</div>
<div class="t" style="left:157.0px;top:774.7px;font-size:14px;line-height:16.8px;color:#9a9a9a;letter-spacing:0.853px;">[ + ]</div>
<div class="t" style="left:30.2px;top:812.4px;font-size:14.5px;line-height:17.4px;color:#2e2e2e;letter-spacing:0.039px;">Model Optimization</div>
<div class="t" style="left:165.0px;top:812.7px;font-size:14px;line-height:16.8px;color:#9a9a9a;letter-spacing:0.853px;">[ + ]</div>
<div class="t" style="left:30.2px;top:850.4px;font-size:14.5px;line-height:17.4px;color:#2e2e2e;letter-spacing:-0.143px;">Parallel and Distributed Training</div>
<div class="t" style="left:241.0px;top:850.7px;font-size:14px;line-height:16.8px;color:#9a9a9a;letter-spacing:0.853px;">[ + ]</div>
<div class="t" style="left:30.2px;top:888.4px;font-size:14.5px;line-height:17.4px;color:#2e2e2e;letter-spacing:-0.233px;">Edge with ExecuTorch</div>
<div class="t" style="left:179.0px;top:888.7px;font-size:14px;line-height:16.8px;color:#9a9a9a;letter-spacing:0.853px;">[ + ]</div>
<div class="t" style="left:30.2px;top:926.4px;font-size:14.5px;line-height:17.4px;color:#2e2e2e;letter-spacing:-0.248px;">Recommendation Systems</div>
<div class="t" style="left:208.0px;top:926.7px;font-size:14px;line-height:16.8px;color:#9a9a9a;letter-spacing:0.853px;">[ + ]</div>
<div class="t" style="left:30.2px;top:964.4px;font-size:14.5px;line-height:17.4px;color:#2e2e2e;letter-spacing:0.169px;">Multimodality</div>
<div class="t" style="left:127.0px;top:964.7px;font-size:14px;line-height:16.8px;color:#9a9a9a;letter-spacing:0.853px;">[ + ]</div>
<div class="r" style="left:302px;top:124px;width:910px;height:1px;background:#e8e8e8;"></div>
<div class="t" style="left:331.0px;top:96.2px;font-size:13.5px;line-height:16.2px;color:#d9534f;letter-spacing:-0.474px;">Tutorials</div>
<div class="t" style="left:381.9px;top:96.2px;font-size:13.5px;line-height:16.2px;color:#333;">&gt;</div>
<div class="t" style="left:392.3px;top:96.2px;font-size:13.5px;line-height:16.2px;color:#d9534f;letter-spacing:-0.732px;">PyTorch Recipes</div>
<div class="t" style="left:486.5px;top:96.2px;font-size:13.5px;line-height:16.2px;color:#333;">&gt;</div>
<div class="t" style="left:496.5px;top:96.2px;font-size:13.5px;line-height:16.2px;color:#333;letter-spacing:-0.466px;">Automatic Mixed Precision</div>
<svg class="r" style="left:993px;top:93px;" width="22" height="18" viewBox="0 0 22 18"><rect x="1" y="1" width="20" height="16" fill="none" stroke="#d9534f" stroke-width="1.4"/><path d="M5 5L9 8.500L5 12M10 13H16" fill="none" stroke="#d9534f" stroke-width="1.4"/></svg>
<div class="t" style="left:1031.0px;top:94.4px;font-size:14px;line-height:16.8px;color:#333;letter-spacing:-0.459px;">Shortcuts</div>
<div class="r" style="left:331px;top:124px;width:681px;height:79px;background:#f6f6f6;"></div>
<div class="m" style="left:353.5px;top:122.3px;font-size:14px;letter-spacing:-0.052px;line-height:21px"><span style="color:#1a1a1a;font-weight:700">        opt.zero_grad()</span><span style="color:#777777;font-style:italic"> # set_to_none=True here can modestly improve</span></div>
<div class="m" style="left:353.5px;top:142.8px;font-size:14px;letter-spacing:-0.052px;line-height:21px"><span style="color:#777777;font-style:italic">performance</span></div>
<div class="m" style="left:353.5px;top:163.9px;font-size:14px;letter-spacing:-0.052px;line-height:21px"><span style="color:#1a1a1a;font-weight:700">end_timer_and_print(</span><span style="color:#c0254c;">&quot;Default precision:&quot;</span><span style="color:#1a1a1a;font-weight:700">)</span></div>
<div class="t" style="left:331.0px;top:248.9px;font-size:24px;line-height:28.8px;color:#262626;letter-spacing:0.646px;">Adding</div>
<div class="r" style="left:421.6px;top:249.4px;width:190.4px;height:28.6px;background:#f3f3f3;"></div>
<div class="m" style="left:422.8px;top:252.8px;font-size:22px;line-height:26.4px;letter-spacing:0.416px;color:#6b6b6b">torch.autocast</div>
<div class="t" style="left:331.0px;top:304.8px;font-size:15px;line-height:18.0px;color:#262626;letter-spacing:-0.273px;">Instances of </div>
<div class="t" style="left:412.5px;top:304.8px;font-size:15px;line-height:18.0px;color:#d9534f;letter-spacing:-0.058px;">torch.autocast</div>
<div class="t" style="left:505.9px;top:304.8px;font-size:15px;line-height:18.0px;color:#262626;letter-spacing:-0.121px;"> serve as context managers that allow regions of your script to run in mixed</div>
<div class="t" style="left:331.0px;top:328.8px;font-size:15px;line-height:18.0px;color:#262626;letter-spacing:-0.169px;">precision.</div>
<div class="t" style="left:331.0px;top:370.8px;font-size:15px;line-height:18.0px;color:#262626;letter-spacing:-0.311px;">In these regions, CUDA ops run in a</div>
<div class="r" style="left:564px;top:368px;width:40.90000000000009px;height:21px;background:#f5f5f5;"></div>
<div class="m" style="left:568.0px;top:371.5px;font-size:13px;line-height:18px;letter-spacing:-1.222px;color:#666666">dtype</div>
<div class="t" style="left:611.3px;top:370.8px;font-size:15px;line-height:18.0px;color:#262626;letter-spacing:-0.408px;">chosen by</div>
<div class="r" style="left:682.7px;top:368px;width:60.799999999999955px;height:21px;background:#f5f5f5;"></div>
<div class="m" style="left:686.7px;top:371.5px;font-size:13px;line-height:18px;letter-spacing:-1.202px;color:#666666">autocast</div>
<div class="t" style="left:749.9px;top:370.8px;font-size:15px;line-height:18.0px;color:#262626;letter-spacing:0.031px;">to improve performance while</div>
<div class="t" style="left:331.0px;top:394.8px;font-size:15px;line-height:18.0px;color:#262626;letter-spacing:-0.297px;">maintaining accuracy. See the</div>
<div class="t" style="left:526.5px;top:394.8px;font-size:15px;line-height:18.0px;color:#d9534f;letter-spacing:-0.262px;">Autocast Op Reference</div>
<div class="t" style="left:681.2px;top:394.8px;font-size:15px;line-height:18.0px;color:#262626;letter-spacing:-0.087px;">for details on what precision</div>
<div class="r" style="left:872px;top:392px;width:60.5px;height:21px;background:#f5f5f5;"></div>
<div class="m" style="left:876.0px;top:395.5px;font-size:13px;line-height:18px;letter-spacing:-1.240px;color:#666666">autocast</div>
<div class="t" style="left:939.6px;top:394.8px;font-size:15px;line-height:18.0px;color:#262626;letter-spacing:-0.452px;">chooses</div>
<div class="t" style="left:331.0px;top:418.8px;font-size:15px;line-height:18.0px;color:#262626;letter-spacing:-0.178px;">for each op, and under what circumstances.</div>
<div class="r" style="left:331px;top:460px;width:681px;height:502px;background:#f6f6f6;"></div>
<svg class="r" style="left:985px;top:465px;" width="20" height="20" viewBox="0 0 20 20"><rect x="6" y="6" width="10" height="10" rx="1.500" fill="none" stroke="#555" stroke-width="1.2"/><path d="M3.500 12V5A1.500 1.500 0 0 1 5 3.500H12" fill="none" stroke="#555" stroke-width="1.2"/></svg>
<div class="m" style="left:353.5px;top:480.6px;font-size:14px;letter-spacing:-0.052px;line-height:21px"><span style="color:#1a1a1a;font-weight:700">for epoch in </span><span style="color:#3a9a9e;">range</span><span style="color:#1a1a1a;font-weight:700">(</span><span style="color:#3a9a9e;">0</span><span style="color:#1a1a1a;font-weight:700">): </span><span style="color:#777777;font-style:italic"># 0 epochs, this section is for illustration only</span></div>
<div class="m" style="left:353.5px;top:501.6px;font-size:14px;letter-spacing:-0.052px;line-height:21px"><span style="color:#1a1a1a;font-weight:700">    for </span><span style="color:#3a9a9e;">input</span><span style="color:#1a1a1a;font-weight:700">, target in </span><span style="color:#3a9a9e;">zip</span><span style="color:#1a1a1a;font-weight:700">(data, targets):</span></div>
<div class="m" style="left:353.5px;top:522.7px;font-size:14px;letter-spacing:-0.052px;line-height:21px"><span style="color:#777777;font-style:italic">        # Runs the forward pass under ``autocast``.</span></div>
<div class="m" style="left:353.5px;top:543.7px;font-size:14px;letter-spacing:-0.052px;line-height:21px"><span style="color:#1a1a1a;font-weight:700">        with torch.autocast(device_type=device, dtype=torch.float16):</span></div>
<div class="m" style="left:353.5px;top:564.7px;font-size:14px;letter-spacing:-0.052px;line-height:21px"><span style="color:#1a1a1a;font-weight:700">            output = net(</span><span style="color:#3a9a9e;">input</span><span style="color:#1a1a1a;font-weight:700">)</span></div>
<div class="m" style="left:353.5px;top:585.8px;font-size:14px;letter-spacing:-0.052px;line-height:21px"><span style="color:#777777;font-style:italic">            # output is float16 because linear layers ``autocast`` to</span></div>
<div class="m" style="left:353.5px;top:606.8px;font-size:14px;letter-spacing:-0.052px;line-height:21px"><span style="color:#777777;font-style:italic">float16.</span></div>
<div class="m" style="left:353.5px;top:627.8px;font-size:14px;letter-spacing:-0.052px;line-height:21px"><span style="color:#1a1a1a;font-weight:700">            assert output.dtype is torch.float16</span></div>
<div class="m" style="left:353.5px;top:669.9px;font-size:14px;letter-spacing:-0.052px;line-height:21px"><span style="color:#1a1a1a;font-weight:700">            loss = loss_fn(output, target)</span></div>
<div class="m" style="left:353.5px;top:690.9px;font-size:14px;letter-spacing:-0.052px;line-height:21px"><span style="color:#777777;font-style:italic">            # loss is float32 because ``mse_loss`` layers ``autocast`` to</span></div>
<div class="m" style="left:353.5px;top:711.9px;font-size:14px;letter-spacing:-0.052px;line-height:21px"><span style="color:#777777;font-style:italic">float32.</span></div>
<div class="m" style="left:353.5px;top:733.0px;font-size:14px;letter-spacing:-0.052px;line-height:21px"><span style="color:#1a1a1a;font-weight:700">            assert loss.dtype is torch.float32</span></div>
<div class="m" style="left:353.5px;top:775.0px;font-size:14px;letter-spacing:-0.052px;line-height:21px"><span style="color:#777777;font-style:italic">        # Exits ``autocast`` before backward().</span></div>
<div class="m" style="left:353.5px;top:796.1px;font-size:14px;letter-spacing:-0.052px;line-height:21px"><span style="color:#777777;font-style:italic">        # Backward passes under ``autocast`` are not recommended.</span></div>
<div class="m" style="left:353.5px;top:817.1px;font-size:14px;letter-spacing:-0.052px;line-height:21px"><span style="color:#777777;font-style:italic">        # Backward ops run in the same ``dtype`` autocast chose for</span></div>
<div class="m" style="left:353.5px;top:838.1px;font-size:14px;letter-spacing:-0.052px;line-height:21px"><span style="color:#777777;font-style:italic">corresponding forward ops.</span></div>
<div class="m" style="left:353.5px;top:859.1px;font-size:14px;letter-spacing:-0.052px;line-height:21px"><span style="color:#1a1a1a;font-weight:700">        loss.backward()</span></div>
<div class="m" style="left:353.5px;top:880.2px;font-size:14px;letter-spacing:-0.052px;line-height:21px"><span style="color:#1a1a1a;font-weight:700">        opt.step()</span></div>
<div class="m" style="left:353.5px;top:901.2px;font-size:14px;letter-spacing:-0.052px;line-height:21px"><span style="color:#1a1a1a;font-weight:700">        opt.zero_grad() </span><span style="color:#777777;font-style:italic"># set_to_none=True here can modestly improve</span></div>
<div class="m" style="left:353.5px;top:922.2px;font-size:14px;letter-spacing:-0.052px;line-height:21px"><span style="color:#777777;font-style:italic">performance</span></div>
<div class="t" style="left:330.6px;top:1006.4px;font-size:24px;line-height:28.8px;color:#262626;letter-spacing:0.712px;">Adding</div>
<div class="r" style="left:420px;top:1006px;width:136.7px;height:28.6px;background:#f3f3f3;"></div>
<div class="m" style="left:421.0px;top:1010.3px;font-size:22px;line-height:26.4px;letter-spacing:0.416px;color:#6b6b6b">GradScaler</div>
<div class="r" style="left:1013px;top:124px;width:199px;height:931px;background:#ffffff;"></div>
<div class="t" style="left:1034.2px;top:151.6px;font-size:13px;line-height:15.6px;color:#262626;letter-spacing:-0.146px;">Automatic Mixed Precision</div>
<div class="t" style="left:1034.2px;top:177.4px;font-size:13px;line-height:15.6px;color:#6b6b6c;letter-spacing:-0.185px;">A simple network</div>
<div class="t" style="left:1034.2px;top:203.5px;font-size:13px;line-height:15.6px;color:#6b6b6c;letter-spacing:-0.280px;">Default Precision</div>
<div class="t" style="left:1034.2px;top:229.7px;font-size:13px;line-height:15.6px;color:#d9534f;letter-spacing:-0.296px;">Adding</div>
<div class="r" style="left:1075px;top:227px;width:106px;height:19px;background:#f5f5f5;"></div>
<div class="m" style="left:1076.7px;top:229.8px;font-size:13px;line-height:16.8px;letter-spacing:-0.495px;color:#5a5a5a">torch.autocast</div>
<div class="t" style="left:1034.2px;top:255.5px;font-size:13px;line-height:15.6px;color:#6b6b6c;letter-spacing:-0.296px;">Adding</div>
<div class="r" style="left:1075px;top:253px;width:76px;height:19px;background:#f5f5f5;"></div>
<div class="m" style="left:1076.7px;top:255.6px;font-size:13px;line-height:16.8px;letter-spacing:-0.572px;color:#5a5a5a">GradScaler</div>
<div class="t" style="left:1034.2px;top:276.6px;font-size:13px;line-height:15.6px;color:#6b6b6c;letter-spacing:-0.055px;">All together: “Automatic</div>
<div class="t" style="left:1034.2px;top:292.3px;font-size:13px;line-height:15.6px;color:#6b6b6c;letter-spacing:-0.299px;">Mixed Precision”</div>
<div class="t" style="left:1034.2px;top:313.7px;font-size:13px;line-height:15.6px;color:#6b6b6c;letter-spacing:-0.185px;">Inspecting/modifying</div>
<div class="t" style="left:1034.2px;top:329.4px;font-size:13px;line-height:15.6px;color:#6b6b6c;letter-spacing:-0.313px;">gradients (e.g., clipping)</div>
<div class="t" style="left:1034.2px;top:355.3px;font-size:13px;line-height:15.6px;color:#6b6b6c;letter-spacing:-0.605px;">Saving/Resuming</div>
<div class="t" style="left:1034.2px;top:381.4px;font-size:13px;line-height:15.6px;color:#6b6b6c;letter-spacing:-0.311px;">Inference/Evaluation</div>
<div class="t" style="left:1034.2px;top:407.2px;font-size:13px;line-height:15.6px;color:#6b6b6c;letter-spacing:-0.319px;">Advanced topics</div>
<div class="t" style="left:1022.5px;top:433.3px;font-size:13px;line-height:15.6px;color:#333;">+</div>
<div class="t" style="left:1034.2px;top:433.3px;font-size:13px;line-height:15.6px;color:#6b6b6c;letter-spacing:-0.143px;">Troubleshooting</div>
</div>
<svg class="r" style="left:1458px;top:820px" width="462" height="260" viewBox="0 0 462 260">
<defs>
<filter id="bl" x="-20%" y="-20%" width="140%" height="140%"><feGaussianBlur stdDeviation="1.6"/></filter>
<filter id="bl3" x="-50%" y="-50%" width="200%" height="200%"><feGaussianBlur stdDeviation="1"/></filter>
<linearGradient id="wall" x1="0" y1="0" x2="1" y2="0"><stop offset="0" stop-color="#dededa"/><stop offset="0.4" stop-color="#ebeae6"/><stop offset="0.62" stop-color="#e6e6e3"/><stop offset="1" stop-color="#dcdedd"/></linearGradient>
<linearGradient id="ceil" x1="0" y1="0" x2="1" y2="0"><stop offset="0" stop-color="#b4b4b2"/><stop offset="0.45" stop-color="#c2c2c0"/><stop offset="1" stop-color="#d8d8d5"/></linearGradient>
<linearGradient id="rw" x1="0" y1="0" x2="0.8" y2="1"><stop offset="0" stop-color="#d6d7d3"/><stop offset="0.45" stop-color="#c9cdcc"/><stop offset="0.8" stop-color="#b5babc"/><stop offset="1" stop-color="#9ea4a6"/></linearGradient>
<radialGradient id="skin" cx="0.5" cy="0.4" r="0.62"><stop offset="0" stop-color="#d6b6a6"/><stop offset="0.75" stop-color="#c7a594"/><stop offset="1" stop-color="#a88a7a"/></radialGradient>
<linearGradient id="neck" x1="0" y1="0" x2="0" y2="1"><stop offset="0" stop-color="#a89080"/><stop offset="0.45" stop-color="#d6bcac"/><stop offset="1" stop-color="#e0c8b8"/></linearGradient>
</defs>
<rect x="0" y="0" width="462" height="260" fill="url(#wall)"/>
<g filter="url(#bl)">
<path d="M311 89L359 0H462V260H311Z" fill="url(#rw)"/>
<path d="M0 0H300L270 56H0Z" fill="url(#ceil)"/>
<path d="M262 60L300 0H309L282 89H262Z" fill="#e4e4df"/>
<path d="M309 0H359L311 89H282Z" fill="#c6c6c2"/>
<path d="M86 0H123L104 15Z" fill="#5c5c5c"/>
<rect x="139" y="64" width="19" height="16" fill="#8c8c8a"/>
<rect x="92" y="86" width="16" height="16" fill="#cbcbc7"/>
<path d="M0 112H14V180L0 190Z" fill="#3c3c3c"/>
<path d="M14 112L23 104V200L14 215Z" fill="#f2f2f0"/>
<rect x="38" y="212" width="13" height="16" fill="#cfcfcb"/>
<rect x="71" y="212" width="15" height="17" fill="#cfcfcb"/>

</g>
<g filter="url(#bl)">
<path d="M67 260C72 225 88 195 127 180C150 172 170 170 184 167C186 192 204 206 224 206C246 206 260 192 263 172C287 178 310 186 327 195C342 210 356 235 366 260Z" fill="#1c2024"/>
<path d="M193 128C195 150 192 162 184 168C186 192 204 206 224 206C246 206 260 192 263 172C254 160 250 145 251 128Z" fill="url(#neck)"/>
<path d="M180 70C178 45 196 32 224 31C252 31 268 45 267 75C267 100 262 120 252 131C244 142 234 147 222 147C208 147 198 140 192 131C183 118 180 95 180 70Z" fill="url(#skin)"/>
<path d="M192 112C196 128 208 144 222 146C238 146 250 134 256 112C252 125 240 134 222 135C206 134 196 126 192 112Z" fill="#9d8a7c" opacity="0.7"/>
<path d="M178 78C174 48 192 28 224 28C256 28 272 48 269 80L266 70C264 55 258 42 246 38C232 34 212 35 200 40C190 45 184 55 182 68Z" fill="#4a3b33"/>
<path d="M177 66C176 80 178 95 181 104L187 100C185 88 184 76 186 62Z" fill="#4f4038"/>
<path d="M269 68C270 82 268 96 265 104L259 100C261 88 262 76 260 62Z" fill="#4f4038"/>
<path d="M196 71Q207 65 217 70M230 70Q242 64 253 71" stroke="#5b4436" stroke-width="3" fill="none"/>
<ellipse cx="207" cy="78" rx="6" ry="3" fill="#7d5f50"/><ellipse cx="241" cy="78" rx="6" ry="3" fill="#7d5f50"/>
<path d="M215 95Q222 100 230 95" stroke="#9a7565" stroke-width="2.5" fill="none"/>
<path d="M208 114Q222 110 238 114" stroke="#94685a" stroke-width="2.6" fill="none"/>
</g>
</svg>
</body></html>
